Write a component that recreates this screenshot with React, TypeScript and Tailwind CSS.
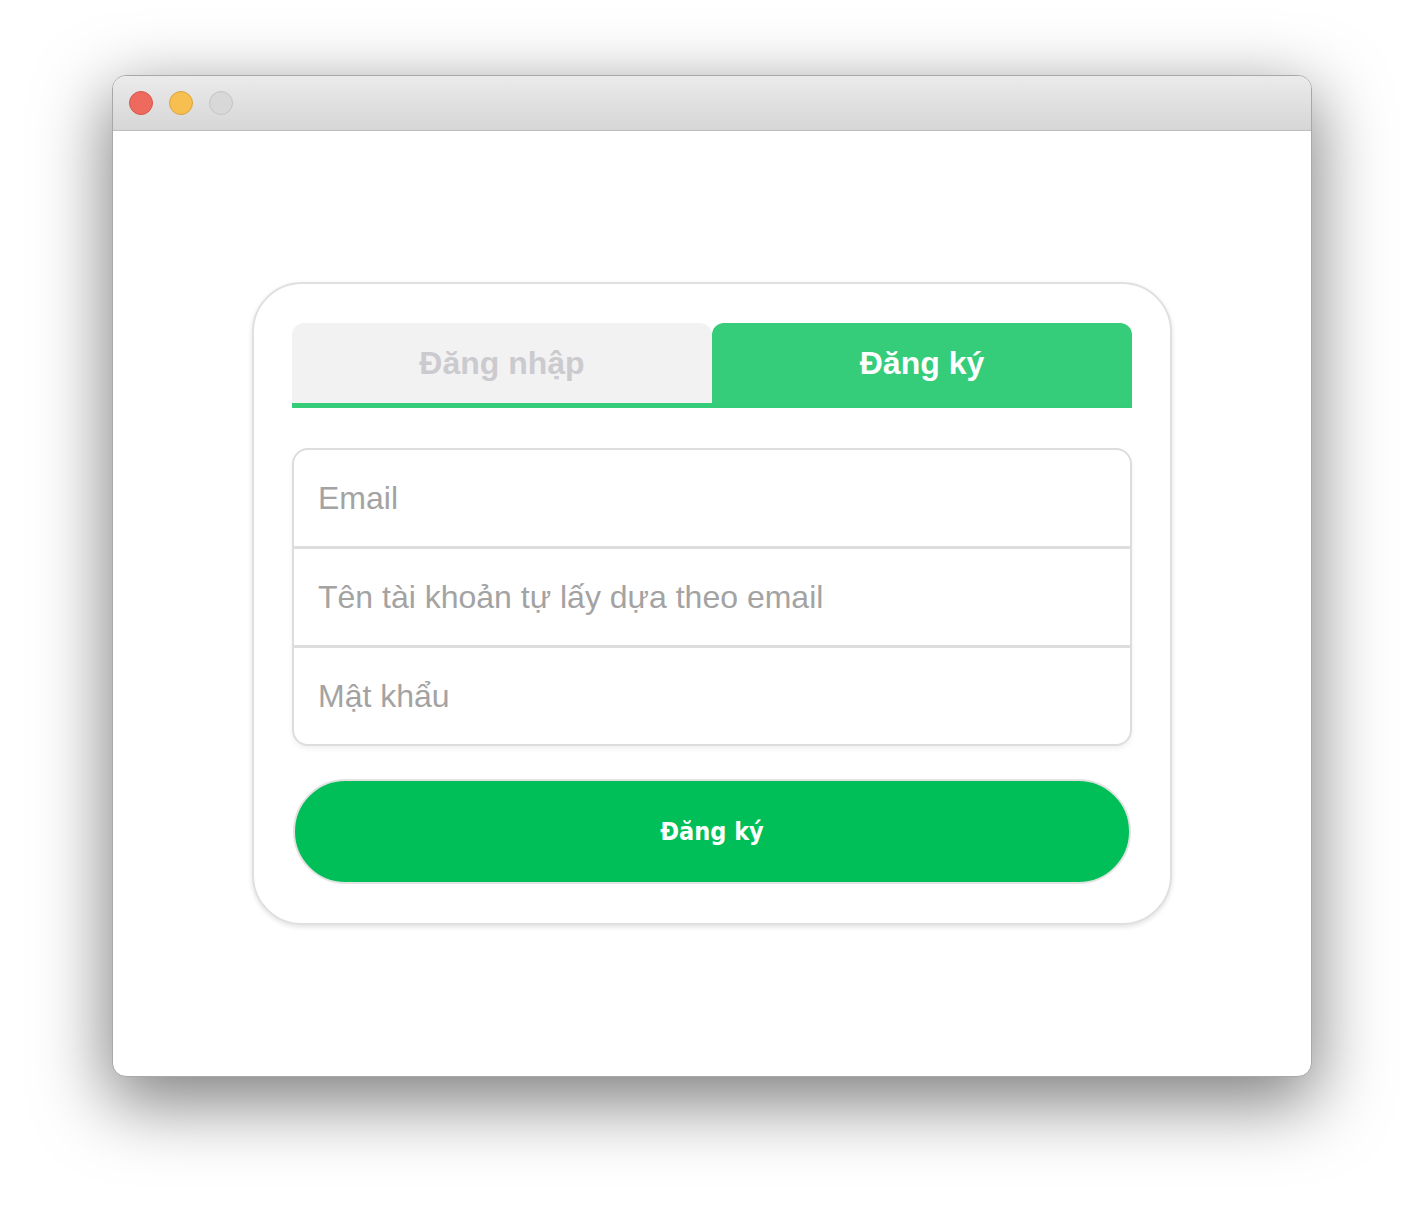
import { useState } from "react";

const arial = "font-['Liberation_Sans',Arial,sans-serif]";

function TrafficLights() {
  return (
    <div className="flex items-center gap-4 pl-4">
      <span className="h-6 w-6 rounded-full border border-[#d5574b] bg-[#ee6a5f]" />
      <span className="h-6 w-6 rounded-full border border-[#d9a440] bg-[#f6bf50]" />
      <span className="h-6 w-6 rounded-full border border-[#c4c4c4] bg-[#d8d8d8]" />
    </div>
  );
}

function Field({ placeholder, type = "text", last }: { placeholder: string; type?: string; last?: boolean }) {
  return (
    <input
      type={type}
      placeholder={placeholder}
      className={`w-full bg-transparent px-6 text-[32px] text-[#555] outline-none placeholder:text-[#a3a3a3] ${arial} ${
        last ? "h-[96px]" : "h-[99px] border-b-[3px] border-[#dddddd]"
      }`}
    />
  );
}

export default function App() {
  const [tab, setTab] = useState<"login" | "register">("register");

  const tabClass = (active: boolean) =>
    `flex-1 rounded-t-[12px] text-[32px] font-bold ${arial} ${
      active ? "bg-[#35cd7a] text-white" : "bg-[#f2f2f2] text-[#cbcbcf]"
    }`;

  return (
    <div className="min-h-[1224px] bg-white pt-[75px] pb-[148px]">
      <div className="mx-auto flex w-[1200px] flex-col overflow-hidden rounded-[14px] border border-[#a8a8a8] bg-white shadow-[0_22px_70px_4px_rgba(0,0,0,0.5)]">
        {/* title bar */}
        <div className="flex h-[55px] items-center border-b border-[#bdbdbd] bg-gradient-to-b from-[#ebebeb] to-[#d6d6d6]">
          <TrafficLights />
        </div>

        {/* content */}
        <div className="flex h-[945px] items-center justify-center">
          <div className="w-[920px] rounded-[50px] border-2 border-[#e0e0e0] bg-white px-[38px] pt-[39px] pb-[39px] shadow-[0_2px_5px_rgba(0,0,0,0.12)]">
            <div className="flex h-[85px] border-b-[5px] border-[#34cc79]">
              <button onClick={() => setTab("login")} className={tabClass(tab === "login")}>
                Đăng nhập
              </button>
              <button onClick={() => setTab("register")} className={tabClass(tab === "register")}>
                Đăng ký
              </button>
            </div>

            <div className="mt-10 flex flex-col overflow-hidden rounded-[16px] border-2 border-[#dddddd] shadow-[0_3px_5px_rgba(0,0,0,0.06)]">
              <Field placeholder="Email" type="email" />
              <Field placeholder="Tên tài khoản tự lấy dựa theo email" />
              <Field placeholder="Mật khẩu" type="password" last />
            </div>

            <button className="mx-px mt-[33px] flex h-[105px] w-[838px] items-center justify-center rounded-full border-2 border-[#e2e2e2] bg-[#00bf58] font-['DejaVu_Sans_Condensed','DejaVu_Sans',Verdana,sans-serif] text-[25px] font-bold text-white">
              Đăng ký
            </button>
          </div>
        </div>
      </div>
    </div>
  );
}
